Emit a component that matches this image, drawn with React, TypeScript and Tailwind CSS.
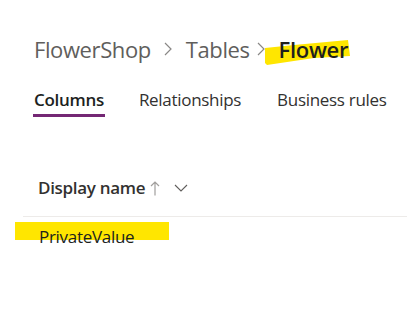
import React from "react";

function Chevron({ className }: { className?: string }) {
  return (
    <svg className={className} width="8" height="14" viewBox="0 0 8 14" fill="none">
      <path d="M1 1 L7 7 L1 13" stroke="#8a8886" strokeWidth="1.2" />
    </svg>
  );
}

export default function App() {
  return (
    <div className="w-[407px] h-[333px] bg-white overflow-hidden" style={{ fontFamily: '"Open Sans", "Noto Sans", sans-serif' }}>
      <div className="pl-[34px] pt-[33px] flex items-center h-[32px] box-content">
        <span className="text-[22px] text-[#605e5c] leading-none tracking-[-0.4px]">FlowerShop</span>
        <Chevron className="ml-[13px] mr-[14px]" />
        <span className="text-[22px] text-[#605e5c] leading-none tracking-[-0.4px]">Tables</span>
        <Chevron className="ml-[7px] mr-[14px]" />
        <span className="relative text-[22px] font-semibold text-[#201f1e] leading-none tracking-[-0.3px]">
          <svg className="absolute left-[-15px] top-[1px]" width="87" height="27" viewBox="0 0 87 27">
            <path d="M1 9 L30 6 L84 1 L86 17 L50 19 L3 26 L1 24 Z" fill="#ffe600" />
          </svg>
          <span className="relative">Flower</span>
        </span>
      </div>
      <div className="pl-[34px] mt-[24px] flex items-start text-[17px] tracking-[-0.3px]">
        <div className="flex flex-col items-stretch">
          <span className="font-semibold text-[#201f1e] leading-[22px]">Columns</span>
          <div className="h-[3px] bg-[#742774] mt-[3px] -mx-[1px]" />
        </div>
        <span className="ml-[35px] text-[#323130] leading-[22px]">Relationships</span>
        <span className="ml-[36px] text-[#323130] leading-[22px]">Business rules</span>
      </div>
      <div className="pl-[38px] mt-[60px] flex items-center h-[22px] text-[17px] tracking-[-0.3px]">
        <span className="font-semibold text-[#323130] leading-[22px]">Display name</span>
        <svg className="ml-[5px]" width="10" height="15" viewBox="0 0 10 15" fill="none">
          <path d="M5 14.5 V1 M1 5 L5 1 L9 5" stroke="#a19f9d" strokeWidth="1.2" />
        </svg>
        <svg className="ml-[14px]" width="14" height="8" viewBox="0 0 14 8" fill="none">
          <path d="M1 1 L7 7 L13 1" stroke="#605e5c" strokeWidth="1.1" />
        </svg>
      </div>
      <div className="ml-[23px] mt-[17px] h-px bg-[#edebe9]" />
      <div className="mt-[5px] relative h-[29px]">
        <div className="absolute left-[15px] top-0 w-[154px] h-[18px] bg-[#ffe600]" />
        <span className="relative block pl-[39px] text-[17px] text-[#201f1e] leading-[29px] tracking-[-0.3px]">PrivateValue</span>
      </div>
    </div>
  );
}
